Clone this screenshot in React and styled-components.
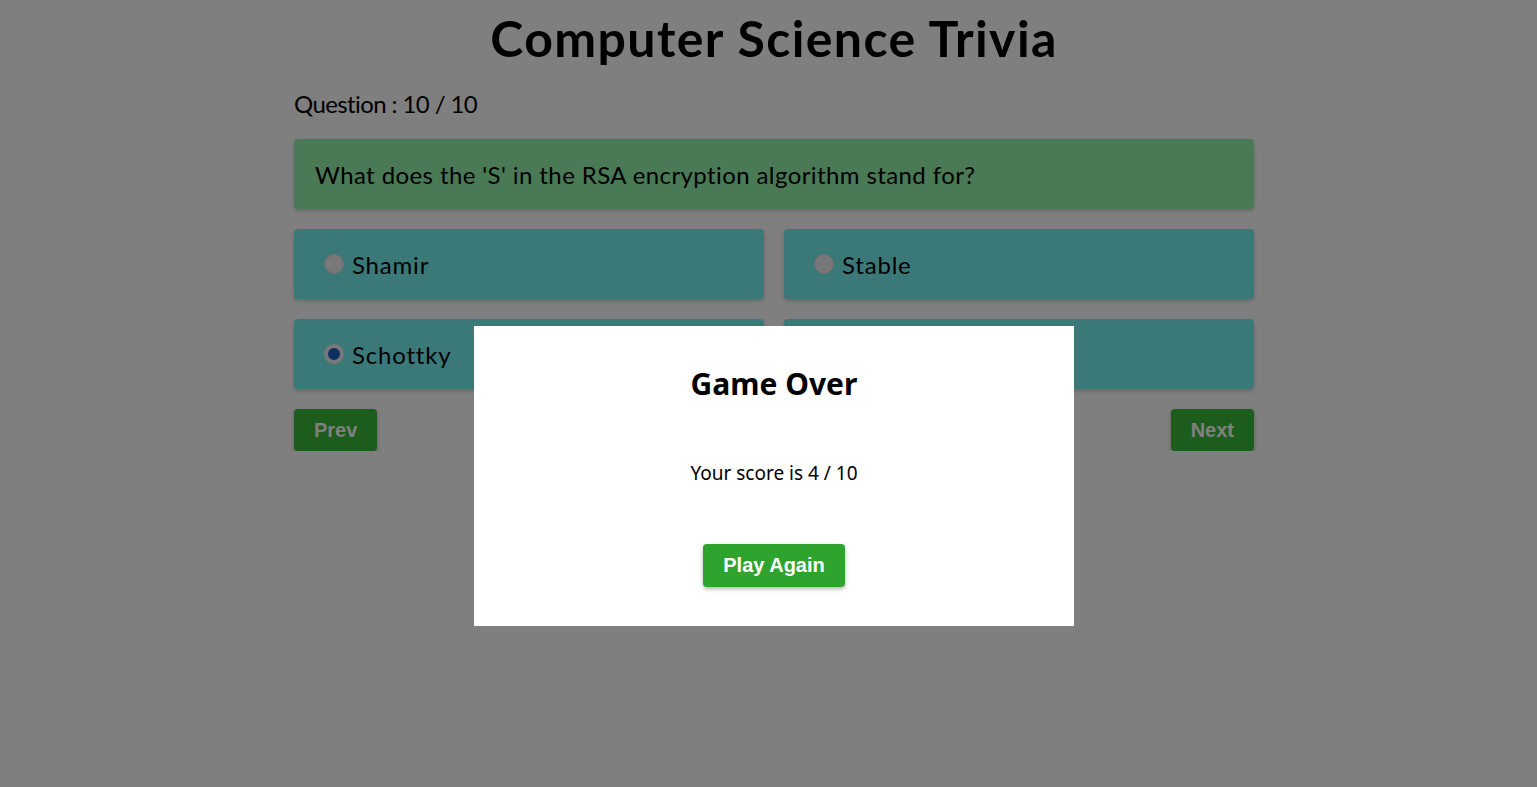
import styled, { createGlobalStyle } from "styled-components"

const GlobalStyle = createGlobalStyle`
    body{
        margin: 0;
        background: #ffffff;
        font-family: 'Lato', 'Noto Sans', sans-serif;
        color: #000000;
    }
`

const options = [
    { label: "Shamir", checked: false },
    { label: "Stable", checked: false },
    { label: "Schottky", checked: true },
    { label: "Secure", checked: false },
]

export default function App(){
    return(
        <>
            <GlobalStyle />
            <SCPage>
                <SCTitle>Computer Science Trivia</SCTitle>
                <SCQuiz>
                    <SCCounter>Question : 10 / 10</SCCounter>
                    <SCQuestion>What does the 'S' in the RSA encryption algorithm stand for?</SCQuestion>
                    <SCOptions>
                        {options.map((o) => (
                            <SCOption key={o.label}>
                                <SCRadio type="radio" name="answer" defaultChecked={o.checked} />
                                {o.label}
                            </SCOption>
                        ))}
                    </SCOptions>
                    <SCNav>
                        <SCNavButton>Prev</SCNavButton>
                        <SCNavButton>Next</SCNavButton>
                    </SCNav>
                </SCQuiz>
            </SCPage>
            <SCOverlay>
                <SCModal>
                    <SCModalTitle>Game Over</SCModalTitle>
                    <SCScore>Your score is 4 / 10</SCScore>
                    <SCPlayButton>Play Again</SCPlayButton>
                </SCModal>
            </SCOverlay>
        </>
    );
}

const SCPage = styled.div`
    padding-left: 11px;
    display: flex;
    flex-direction: column;
    align-items: center;
`

const SCTitle = styled.h1`
    margin: 8px 0 0 0;
    font-family: 'Lato', sans-serif;
    font-weight: 700;
    font-size: 50px;
    line-height: 60px;
    letter-spacing: 1.4px;
`

const SCQuiz = styled.div`
    width: 960px;
`

const SCCounter = styled.p`
    margin: 21px 0 0 0;
    font-size: 24px;
    line-height: 30px;
    letter-spacing: -0.6px;
`

const SCQuestion = styled.div`
    margin-top: 20px;
    height: 70px;
    box-sizing: border-box;
    padding: 0 21px;
    display: flex;
    align-items: center;
    background: #94f2aa;
    border-radius: 4px;
    box-shadow: 0 2px 4px rgba(0, 0, 0, 0.2);
    font-size: 24px;
    letter-spacing: 0.4px;
`

const SCOptions = styled.div`
    margin-top: 20px;
    display: grid;
    grid-template-columns: 1fr 1fr;
    gap: 20px;
`

const SCOption = styled.label`
    height: 70px;
    box-sizing: border-box;
    padding: 0 30px;
    display: flex;
    align-items: center;
    gap: 8px;
    background: #76f2f2;
    border-radius: 4px;
    box-shadow: 0 2px 4px rgba(0, 0, 0, 0.2);
    font-size: 24px;
    letter-spacing: 0.8px;
`

const SCRadio = styled.input`
    appearance: none;
    width: 20px;
    height: 20px;
    margin: 0;
    border-radius: 50%;
    background: #f0f0f0;
    border: 1px solid #dddddd;
    box-sizing: border-box;

    &:checked{
        background: #1e5cc8;
        border: 4px solid #f0f0f0;
    }
`

const SCNav = styled.div`
    margin-top: 20px;
    display: flex;
    justify-content: space-between;
`

const SCNavButton = styled.button`
    height: 42px;
    padding: 0 20px;
    background: #38b838;
    border: none;
    border-radius: 4px;
    box-shadow: 0 2px 4px rgba(0, 0, 0, 0.3);
    font-family: 'Liberation Sans', Arial, sans-serif;
    font-weight: 700;
    font-size: 20px;
    color: #ffffff;
`

const SCOverlay = styled.div`
    position: fixed;
    inset: 0;
    background: rgba(0, 0, 0, 0.5);
    display: flex;
    justify-content: center;
    align-items: flex-start;
    padding-left: 11px;
`

const SCModal = styled.div`
    margin-top: 326px;
    width: 600px;
    height: 300px;
    background: #ffffff;
    display: flex;
    flex-direction: column;
    align-items: center;
    font-family: 'Noto Sans', sans-serif;
`

const SCModalTitle = styled.h2`
    margin: 39px 0 0 0;
    font-size: 30px;
    line-height: 38px;
    font-weight: 700;
`

const SCScore = styled.p`
    margin: 58px 0 0 0;
    font-size: 19px;
    line-height: 24px;
`

const SCPlayButton = styled.button`
    margin-top: 59px;
    width: 142px;
    height: 43px;
    background: #2ea42e;
    border: none;
    border-radius: 4px;
    box-shadow: 0 2px 4px rgba(0, 0, 0, 0.3);
    font-family: 'Liberation Sans', Arial, sans-serif;
    font-weight: 700;
    font-size: 20px;
    color: #ffffff;
`
